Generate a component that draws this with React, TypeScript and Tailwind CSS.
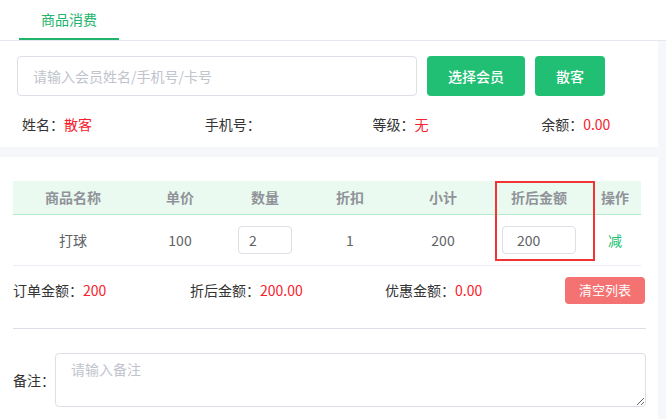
const cols = [
  { title: "商品名称", w: "w-[120px]" },
  { title: "单价", w: "w-[94px]" },
  { title: "数量", w: "w-[76px]" },
  { title: "折扣", w: "w-[94px]" },
  { title: "小计", w: "w-[92px]" },
  { title: "折后金额", w: "w-[100px]" },
  { title: "操作", w: "w-[52px]" },
];

const InfoItem = ({ label, value, w }: { label: string; value?: string; w: string }) => (
  <div className={`${w} text-[14px] text-[#333]`}>
    {label}：<span className="text-[#f5222d]">{value}</span>
  </div>
);

export default function App() {
  return (
    <div
      className="w-[666px] h-[419px] overflow-hidden bg-[#f5f7fa]"
      style={{ fontFamily: '"Noto Sans CJK SC", "Noto Sans", sans-serif' }}
    >
      {/* tabs */}
      <div className="h-[41px] bg-white border-b border-[#e4e7ed] flex pl-[19px]">
        <div className="w-[100px] h-[40px] flex items-center justify-center text-[14px] text-[#21b46c] border-b-2 border-[#21b46c]">
          商品消费
        </div>
      </div>

      {/* member card */}
      <div className="w-[658px] bg-white pt-[15px] pb-[12px] px-[17px]">
        <div className="flex gap-[10px]">
          <input
            className="w-[400px] h-[40px] border border-[#dcdfe6] rounded-[4px] px-[15px] text-[14px] outline-none placeholder:text-[#c0c4cc]"
            placeholder="请输入会员姓名/手机号/卡号"
          />
          <button className="w-[98px] h-[40px] rounded-[4px] bg-[#21bf73] text-white text-[14px] font-medium">
            选择会员
          </button>
          <button className="w-[70px] h-[40px] rounded-[4px] bg-[#21bf73] text-white text-[14px] font-medium">
            散客
          </button>
        </div>
        <div className="flex mt-[17px] pl-[5px] h-[22px] items-center">
          <InfoItem label="姓名" value="散客" w="w-[183px]" />
          <InfoItem label="手机号" w="w-[168px]" />
          <InfoItem label="等级" value="无" w="w-[169px]" />
          <InfoItem label="余额" value="0.00" w="w-[100px]" />
        </div>
      </div>

      {/* order card */}
      <div className="w-[658px] h-[262px] bg-white mt-[10px] pt-[24px] px-[13px]">
        <div className="relative w-[628px]">
          <div className="flex h-[34px] bg-[#ebfaf0] border-b border-[#b7e8c9] items-center">
            {cols.map((c) => (
              <div key={c.title} className={`${c.w} text-center text-[14px] font-bold text-[#909399]`}>
                {c.title}
              </div>
            ))}
          </div>
          <div className="flex h-[51px] border-b border-[#ebeef5] items-center text-[14px] text-[#606266]">
            <div className="w-[120px] text-center">打球</div>
            <div className="w-[94px] text-center">100</div>
            <div className="w-[76px] flex justify-center">
              <input
                className="w-[54px] h-[28px] border border-[#dcdfe6] rounded-[4px] px-[10px] text-[14px] text-[#606266] outline-none"
                defaultValue="2"
              />
            </div>
            <div className="w-[94px] text-center">1</div>
            <div className="w-[92px] text-center">200</div>
            <div className="w-[100px] flex justify-center">
              <input
                className="w-[74px] h-[28px] border border-[#dcdfe6] rounded-[4px] px-[14px] text-[14px] text-[#606266] outline-none"
                defaultValue="200"
              />
            </div>
            <div className="w-[52px] text-center text-[#21bf73]">减</div>
          </div>
          {/* highlight box */}
          <div className="absolute left-[482px] top-0 w-[100px] h-[80px] border-2 border-[#f33434] pointer-events-none" />
        </div>

        <div className="flex items-center mt-[10px] h-[28px] w-[632px]">
          <InfoItem label="订单金额" value="200" w="w-[177px]" />
          <InfoItem label="折后金额" value="200.00" w="w-[195px]" />
          <InfoItem label="优惠金额" value="0.00" w="w-[180px]" />
          <button className="ml-auto w-[80px] h-[27px] rounded-[4px] bg-[#f57272] text-white text-[13px]">
            清空列表
          </button>
        </div>

        <div className="mt-[24px] w-[633px] border-t border-[#dcdfe6]" />

        <div className="flex items-center mt-[24px] w-[633px]">
          <div className="w-[42px] text-[14px] text-[#333]">备注：</div>
          <textarea
            className="flex-1 h-[54px] border border-[#dcdfe6] rounded-[4px] px-[15px] py-[5px] text-[14px] outline-none placeholder:text-[#c0c4cc]"
            placeholder="请输入备注"
          />
        </div>
      </div>
    </div>
  );
}
